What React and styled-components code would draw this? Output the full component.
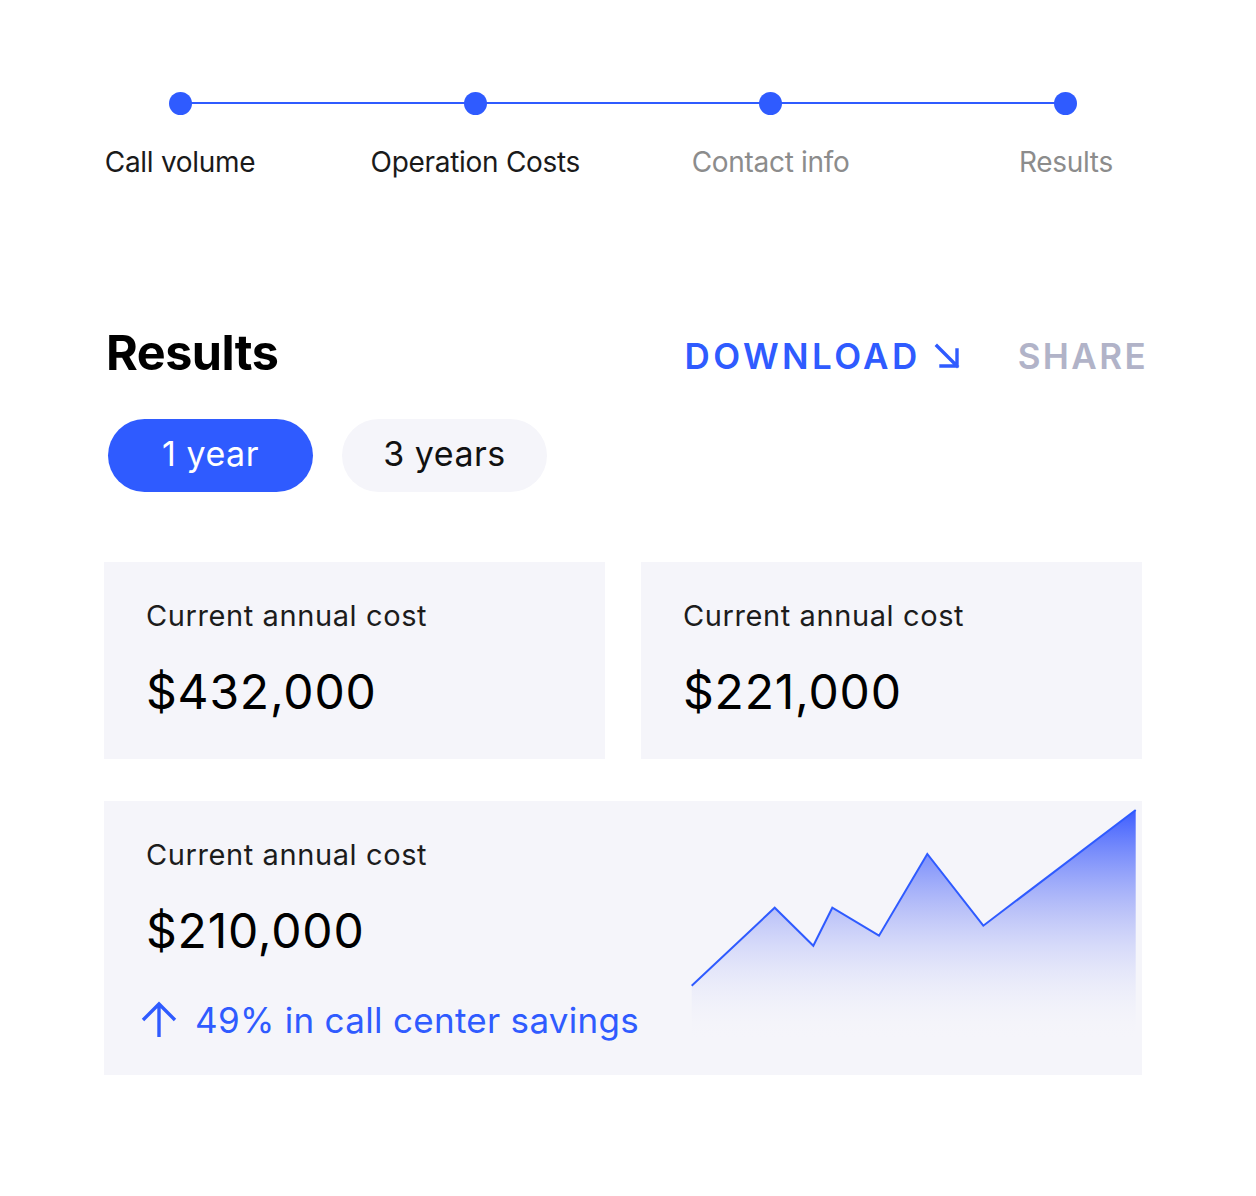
import React from 'react';
import styled, { createGlobalStyle } from 'styled-components';

const GlobalStyle = createGlobalStyle`
  body {
    margin: 0;
    background: #fff;
    font-family: Inter, "Noto Sans", sans-serif;
    color: #111;
  }
`;

const steps = [
  { label: 'Call volume', done: true },
  { label: 'Operation Costs', done: true },
  { label: 'Contact info', done: false },
  { label: 'Results', done: false },
];

const points = [
  [3.7, 180.7],
  [86.7, 102.7],
  [125.3, 140.7],
  [144.3, 102.7],
  [191, 130.7],
  [239.3, 49],
  [295.3, 120.7],
  [447.7, 5],
];

const App = () => {
  const line = points.map((p) => p.join(',')).join(' ');
  const area = `M3.7,240 L${line.replace(/ /g, ' L')} L447.7,240 Z`;
  return (
    <>
      <GlobalStyle />
      <Page>
        <Steps>
          {steps.map((s, i) => (
            <Step key={s.label} $last={i === steps.length - 1}>
              <Dot />
              <StepLabel $done={s.done}>{s.label}</StepLabel>
            </Step>
          ))}
        </Steps>

        <Content>
          <Header>
            <Title>Results</Title>
            <Actions>
              <Download>
                DOWNLOAD
                <svg width="28" height="28" viewBox="0 0 28 28" fill="none">
                  <path d="M4 4 L24 24 M8 24 H24 V8" stroke="#2f5bff" strokeWidth="3.4" strokeLinecap="square" />
                </svg>
              </Download>
              <Share>SHARE</Share>
            </Actions>
          </Header>

          <Pills>
            <Pill $active>1 year</Pill>
            <Pill>3 years</Pill>
          </Pills>

          <Cards>
            <Card>
              <CardLabel>Current annual cost</CardLabel>
              <CardValue>$432,000</CardValue>
            </Card>
            <Card>
              <CardLabel>Current annual cost</CardLabel>
              <CardValue>$221,000</CardValue>
            </Card>
          </Cards>

          <WideCard>
            <WideText>
              <CardLabel>Current annual cost</CardLabel>
              <CardValue>$210,000</CardValue>
              <Savings>
                <svg width="38" height="38" viewBox="0 0 38 38" fill="none">
                  <path d="M19 36 V4 M3 19 L19 3 L35 19" stroke="#2f5bff" strokeWidth="3.4" />
                </svg>
                49% in call center savings
              </Savings>
            </WideText>
            <Chart width="450" height="240" viewBox="0 0 450 240">
              <defs>
                <linearGradient id="fill" x1="0" y1="5" x2="0" y2="235" gradientUnits="userSpaceOnUse">
                  <stop offset="0" stopColor="#3355ff" stopOpacity="0.95" />
                  <stop offset="0.45" stopColor="#8f9cf7" stopOpacity="0.55" />
                  <stop offset="1" stopColor="#f5f5fa" stopOpacity="0" />
                </linearGradient>
              </defs>
              <path d={area} fill="url(#fill)" />
              <polyline points={line} fill="none" stroke="#2f5bff" strokeWidth="2" strokeLinejoin="miter" />
            </Chart>
          </WideCard>
        </Content>
      </Page>
    </>
  );
};

export default App;

const Page = styled.div`
  width: 1256px;
  padding-top: 92px;
  padding-bottom: 120px;
`;

const Steps = styled.div`
  display: grid;
  grid-template-columns: repeat(4, 295.3px);
  margin-left: 32.4px;
`;

const Step = styled.div`
  position: relative;
  display: flex;
  flex-direction: column;
  align-items: center;

  &::after {
    content: '';
    display: ${(p) => (p.$last ? 'none' : 'block')};
    position: absolute;
    top: 10px;
    left: 50%;
    width: 100%;
    height: 2px;
    background: #2f5bff;
  }
`;

const Dot = styled.span`
  width: 23px;
  height: 23px;
  border-radius: 50%;
  background: #2f5bff;
  position: relative;
  z-index: 1;
`;

const StepLabel = styled.div`
  margin-top: 29px;
  font-size: 28px;
  line-height: 36px;
  letter-spacing: -0.3px;
  color: ${(p) => (p.$done ? '#1a1a1a' : '#8c8c8c')};
  white-space: nowrap;
`;

const Content = styled.div`
  margin-left: 104px;
  width: 1038px;
  margin-top: 145px;
`;

const Header = styled.div`
  display: flex;
  align-items: center;
  justify-content: space-between;
`;

const Title = styled.h1`
  margin: 0 0 0 2px;
  font-size: 48.5px;
  line-height: 56px;
  font-weight: 700;
  letter-spacing: -0.5px;
  color: #000;
`;

const Actions = styled.div`
  display: flex;
  align-items: center;
  gap: 57px;
  margin-top: 6px;
`;

const ActionText = styled.a`
  font-size: 35px;
  line-height: 40px;
  font-weight: 600;
  letter-spacing: 3.4px;
  display: flex;
  align-items: center;
  gap: 14px;
`;

const Download = styled(ActionText)`
  color: #2f5bff;
  gap: 12px;
`;

const Share = styled(ActionText)`
  color: #b1b3c8;
  letter-spacing: 2.4px;
  margin-right: -6px;
`;

const Pills = styled.div`
  display: flex;
  gap: 29px;
  margin-top: 38px;
  margin-left: 4px;
`;

const Pill = styled.button`
  width: 205px;
  height: 73px;
  border: none;
  border-radius: 37px;
  font-family: inherit;
  font-size: 34px;
  letter-spacing: 0.5px;
  background: ${(p) => (p.$active ? '#2f5bff' : '#f5f5fa')};
  color: ${(p) => (p.$active ? '#fff' : '#111')};
  padding: 0 0 4px;
`;

const Cards = styled.div`
  display: grid;
  grid-template-columns: 501px 501px;
  gap: 36px;
  margin-top: 70px;
`;

const Card = styled.div`
  background: #f5f5fa;
  height: 197px;
  padding: 36px 42px 0;
  box-sizing: border-box;
`;

const CardLabel = styled.div`
  font-size: 29px;
  line-height: 36px;
  letter-spacing: 0.6px;
  color: #1c1c1c;
`;

const CardValue = styled.div`
  margin-top: 30px;
  font-size: 48px;
  line-height: 56px;
  letter-spacing: 0.8px;
  color: #000;
`;

const WideCard = styled.div`
  display: grid;
  grid-template-columns: 1fr 450px;
  background: #f5f5fa;
  height: 274px;
  margin-top: 42px;
  padding: 0 4px 0 42px;
  box-sizing: border-box;
`;

const WideText = styled.div`
  padding-top: 36px;
`;

const Savings = styled.div`
  display: flex;
  align-items: center;
  gap: 17px;
  margin-top: 39px;
  margin-left: -6px;
  font-size: 35px;
  line-height: 44px;
  letter-spacing: 0.3px;
  color: #2f5bff;
`;

const Chart = styled.svg`
  display: block;
  margin-top: 4px;
`;
